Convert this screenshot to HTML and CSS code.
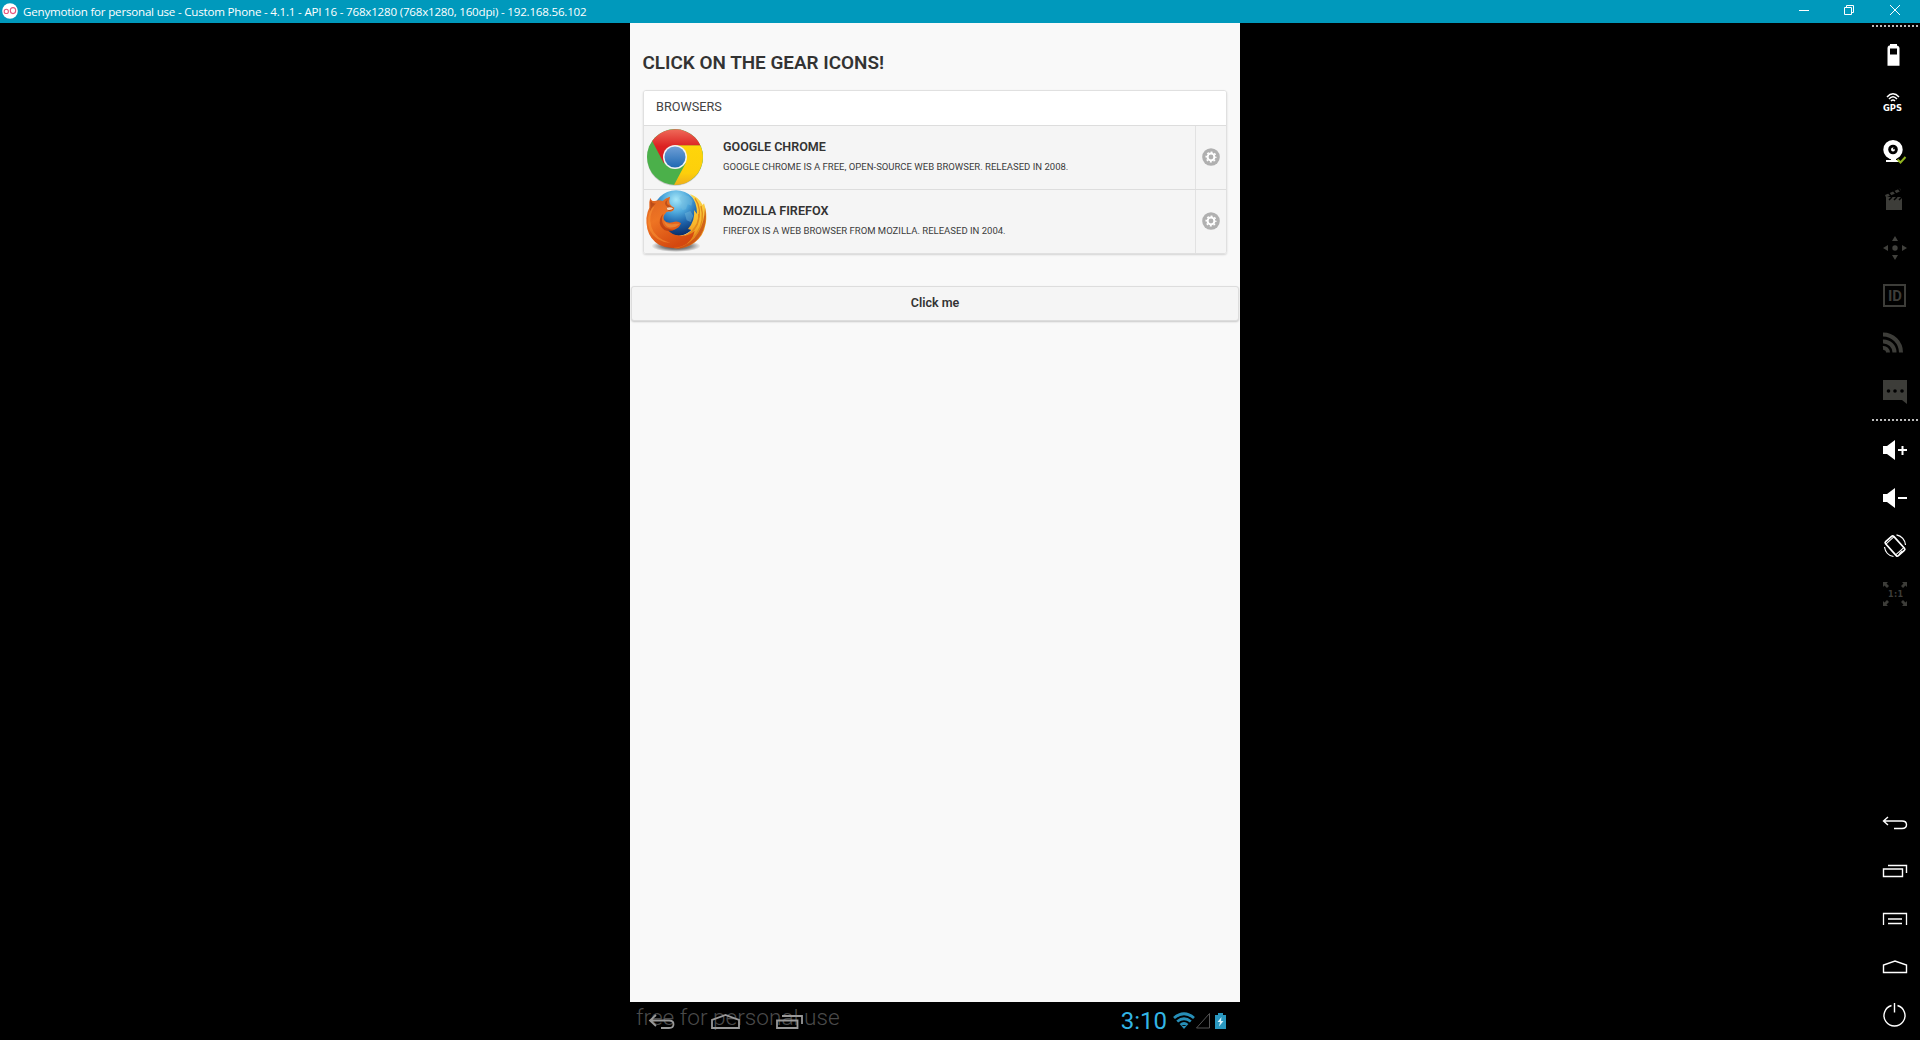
FILE: index.html
```html
<!DOCTYPE html>
<html lang="en">
<head>
<meta charset="utf-8">
<title>Genymotion</title>
<link rel="stylesheet" href="styles.css">
</head>
<body>
<header class="titlebar">
  <svg class="logo" width="16" height="16" viewBox="0 0 16 16"><circle cx="8" cy="8" r="7.8" fill="#fff"/><g fill="none" stroke="#e5587f" stroke-width="1.1"><circle cx="4.3" cy="8.4" r="2.1"/><ellipse cx="11" cy="7.6" rx="2.7" ry="3"/></g></svg>
  <span class="window-title">Genymotion for personal use - Custom Phone - 4.1.1 - API 16 - 768x1280 (768x1280, 160dpi) - 192.168.56.102</span>
  <svg class="window-buttons" width="122" height="23" viewBox="0 0 122 23" fill="none" stroke="#fff"><path d="M1 10.5H11M46.500 7.500H53.500V14.500H46.500ZM48.500 7V5.500H55.500V12.500H54M92 5L102 15M102 5L92 15"/></svg>
</header>
<div class="workspace">
  <main class="phone">
    <section class="screen">
      <h1>CLICK ON THE GEAR ICONS!</h1>
      <ul class="list">
        <li class="divider">BROWSERS</li>
        <li class="row">
          <svg class="thumb" width="64" height="63" viewBox="0 0 64 63">
            <defs>
              <linearGradient id="red" x2="0" y2="1"><stop stop-color="#ef6a59"/><stop offset=".5" stop-color="#dc2222"/><stop offset="1" stop-color="#d9141c"/></linearGradient>
              <linearGradient id="blue" x2="0" y2="1"><stop stop-color="#6f9fd6"/><stop offset="1" stop-color="#1f69b3"/></linearGradient>
              <linearGradient id="yellow" x2="0" y2="1"><stop stop-color="#ffd50a"/><stop offset=".7" stop-color="#fdcf0b"/><stop offset="1" stop-color="#efae1c"/></linearGradient>
            </defs>
            <ellipse cx="31" cy="32" rx="28" ry="27.800" fill="#000" opacity=".18"/>
            <circle cx="31" cy="31" r="28" fill="#4bb04a"/>
            <path d="M31 19.200H56.300A28 28 0 0 1 30 59L41.500 37.500Z" fill="url(#yellow)"/>
            <path d="M8.200 15A28 28 0 0 1 56.300 19.200H31L20 37.500Z" fill="url(#red)"/>
            <circle cx="31" cy="31" r="12" fill="#f3f3f3"/><circle cx="31" cy="31" r="10.500" fill="url(#blue)"/>
          </svg>
          <div class="copy"><h2>GOOGLE CHROME</h2><p>GOOGLE CHROME IS A FREE, OPEN-SOURCE WEB BROWSER. RELEASED IN 2008.</p></div>
          <div class="gear"><svg width="18" height="18" viewBox="0 0 18 18"><circle cx="9" cy="9" r="8.800" fill="#b0b0b0"/><circle cx="9" cy="9" r="3.400" fill="none" stroke="#fff" stroke-width="2"/><circle cx="9" cy="9" r="4.800" fill="none" stroke="#fff" stroke-width="1.500" stroke-dasharray="1.900 1.870" stroke-dashoffset=".95"/></svg></div>
        </li>
        <li class="row">
          <svg class="thumb" width="64" height="63" viewBox="12 12 192 189">
            <defs>
              <radialGradient id="globe" cx=".5" cy=".2" r=".8"><stop stop-color="#a5e6f8"/><stop offset=".35" stop-color="#4fa9dc"/><stop offset=".65" stop-color="#1d63ab"/><stop offset="1" stop-color="#0a2a63"/></radialGradient>
              <linearGradient id="fox" x2=".5" y2="1"><stop stop-color="#dd6321"/><stop offset=".45" stop-color="#ee7423"/><stop offset="1" stop-color="#d4480f"/></linearGradient>
              <linearGradient id="tail" x2="0" y2="1"><stop stop-color="#fbd94c"/><stop offset=".55" stop-color="#f8b62c"/><stop offset="1" stop-color="#e36b17"/></linearGradient>
              <radialGradient id="ground"><stop stop-opacity=".8"/><stop offset=".6" stop-opacity=".45"/><stop offset="1" stop-opacity="0"/></radialGradient>
            </defs>
            <ellipse cx="108" cy="180" rx="74" ry="18" fill="url(#ground)"/>
            <circle cx="108" cy="82" r="69" fill="url(#globe)"/>
            <path d="M118 36L130 26L146 31L158 44L154 59L143 55L138 70L128 72L120 61L126 52ZM134 82L151 75L160 89L152 108L140 103Z" fill="#75bddd" opacity=".45"/>
            <path d="M150 24Q178 34 188 57L192 52Q203 84 197 114Q191 151 163 170Q137 190 101 187L105 148Q137 153 154 132L144 129Q166 104 162 72L171 84Q171 47 150 24Z" fill="url(#tail)"/>
            <path d="M165 37Q188 70 172 112Q160 139 130 158M183 60Q196 105 170 142Q151 168 116 177M176 84Q180 119 149 143" fill="none" stroke="#e18a1b" stroke-width="4"/>
            <path d="M195 65Q205 111 181 149Q156 185 108 188Q155 175 174 141Q194 107 195 65Z" fill="#c44a14" opacity=".75"/>
            <path d="M31 35Q34 47 45 45Q56 41 68 45Q76 36 90 32Q86 46 89 53Q93 60 103 65Q102 75 91 77Q79 75 75 84Q68 91 72 102Q80 114 98 109Q113 103 123 112Q119 126 103 131Q91 135 82 130Q97 151 126 149Q149 149 164 134Q158 167 126 181Q91 193 57 176Q30 160 22 129Q14 92 28 65Q26 48 31 35Z" fill="url(#fox)"/>
            <path d="M32 41Q37 55 48 52Q36 61 30 77Q32 60 31 50ZM87 37Q78 46 82 55L101 66Q99 74 87 75Q76 69 82 62Q73 56 76 47Z" fill="#ad4216" opacity=".7"/>
            <path d="M44 61Q24 91 34 122Q44 156 91 171Q47 168 29 133Q16 95 35 67Z" fill="#f99436" opacity=".55"/>
            <path d="M70 83Q61 104 72 119Q81 130 104 131Q77 144 62 120Q53 98 70 83Z" fill="#b53b10" opacity=".75"/>
            <path d="M72 104Q84 119 105 113L120 113Q105 127 86 124Q75 120 72 104Z" fill="#e98335"/>
            <path d="M80 65Q92 62 100 67Q93 74 82 71Z" fill="#f4d8bd"/>
          </svg>
          <div class="copy"><h2 class="firefox-name">MOZILLA FIREFOX</h2><p>FIREFOX IS A WEB BROWSER FROM MOZILLA. RELEASED IN 2004.</p></div>
          <div class="gear"><svg width="18" height="18" viewBox="0 0 18 18"><circle cx="9" cy="9" r="8.800" fill="#b0b0b0"/><circle cx="9" cy="9" r="3.400" fill="none" stroke="#fff" stroke-width="2"/><circle cx="9" cy="9" r="4.800" fill="none" stroke="#fff" stroke-width="1.500" stroke-dasharray="1.900 1.870" stroke-dashoffset=".95"/></svg></div>
        </li>
      </ul>
      <button class="click" type="button">Click me</button>
    </section>
    <footer class="navbar">
      <span class="watermark">free for personal use</span>
      <svg class="nav-icons" width="200" height="38" viewBox="0 0 200 38" fill="none" stroke="#999" stroke-width="1.800"><path d="M26 13L20 18.500L26 24M20 18.500H39C45 18.500 45 26 39 26H31M82 26V18L95.500 13L109 18V26ZM147 18.500H167.500V26H147ZM152 14H172V22"/></svg>
      <span class="clock">3:10</span>
      <svg class="status" width="54" height="18" viewBox="0 0 54 18"><g fill="none" stroke="#278fb8" stroke-width="2.800"><path d="M1 6Q11 -2.500 21 6M4.200 9.500Q11 4 17.800 9.500M7.500 13Q11 10 14.500 13"/></g><path d="M8.500 14L11 17L13.500 14Z" fill="#278fb8"/><path d="M23.500 16H36.500V1.500Z" fill="none" stroke="#555"/><path d="M42 3H45V1H50V3H53V17H42Z" fill="#2997bf"/><path d="M48.500 5L44.500 10H47L46 14.500L50.500 9H48Z" fill="#d8f3fc"/></svg>
    </footer>
  </main>
  <aside class="tools">
    <div class="dots"></div>
    <div class="group group-top">
      <svg viewBox="0 0 48 48"><path d="M18 14.500Q16.500 15 16.500 17V34.700H28.500V17Q28.500 15 26 14.500V13H19V14.500ZM19 17.500H26V23.500H19Z" fill="#fff" fill-rule="evenodd"/></svg>
      <svg viewBox="0 0 48 48"><g fill="none" stroke="#fff" stroke-width="1.500"><path d="M16 18Q22 11.500 28 18M18 20Q22 15.500 26 20M20 22Q22 20 24 22"/></g><text class="gps" x="12" y="32" textLength="19" lengthAdjust="spacingAndGlyphs">GPS</text></svg>
      <svg viewBox="0 0 48 48"><path d="M22 13a9.700 9.700 0 1 1 0 19.400a9.700 9.700 0 1 1 0-19.400" fill="#fff"/><path d="M20 31H25V33H28V35H15V33H20Z" fill="#fff"/><circle cx="22" cy="22.500" r="4.800"/><circle cx="22" cy="22.500" r="2" fill="#fff"/><circle cx="23" cy="21.500" r="1"/><path d="M26.500 32.500L29.500 35.500L34.500 30" fill="none" stroke="#91b51f" stroke-width="2"/></svg>
      <svg viewBox="0 0 48 48" fill="#3d3d39"><path d="M15 24H31V35H15ZM14 20L29 13.500L30 16L15 22.500Z"/><path d="M15 22H31V24H15Z"/><path d="M17 17L20 21M22 15L25 19M27 13L30 17M18 25L21 22M23 25L26 22M28 25L31 22" stroke="#000" stroke-width="1.500"/></svg>
      <svg viewBox="0 0 48 48" fill="#41413d"><circle cx="24" cy="25" r="2.700"/><path d="M24 13L27 18H21ZM24 37L21 32H27ZM12 25L17 22V28ZM36 25L31 22V28Z"/></svg>
      <svg viewBox="0 0 48 48"><path d="M13 14H34V35H13Z" fill="none" stroke="#3d3d39" stroke-width="2"/><text class="device-id" x="17" y="30" textLength="14" lengthAdjust="spacingAndGlyphs">ID</text></svg>
      <svg viewBox="0 0 48 48"><path d="M12 29A4.500 4.500 0 0 1 17 33.500M12 22.500A11 11 0 0 1 23.500 33.500M12 15.500A18 18 0 0 1 30 33.500" fill="none" stroke="#3d3d39" stroke-width="4"/></svg>
      <svg viewBox="0 0 48 48"><path d="M12 13H36V37L31 33H12Z" fill="#3d3d39"/><g fill="#000"><circle cx="17.500" cy="24" r="1.800"/><circle cx="24" cy="24" r="1.800"/><circle cx="31" cy="24" r="1.800"/></g></svg>
    </div>
    <div class="dots dots-lower"></div>
    <div class="group">
      <svg viewBox="0 0 48 48" fill="#fff"><path d="M12 20H16L24 14V34L16 28H12ZM27 23H30.500V20H32.500V23H36V25H32.500V29H30.500V25H27Z"/></svg>
      <svg viewBox="0 0 48 48" fill="#fff"><path d="M12 20H16L24 14V34L16 28H12ZM27 23H36V25H27Z"/></svg>
      <svg viewBox="0 0 48 48" fill="none" stroke="#fff"><g transform="rotate(-42 24 24)"><rect x="18.500" y="14.500" width="11" height="19" rx="1.500" stroke-width="1.700"/><path d="M18.500 31H29.500M22 32.500H26M18.500 16.500H29.500"/></g><path d="M25.500 12.800A11 11 0 0 1 34.500 23M13.500 25A11 11 0 0 0 22.500 34.500" stroke-width="1.200"/></svg>
      <svg viewBox="0 0 48 48" fill="#3d3d39"><path d="M12 12H17L15.500 13.500L18 16L16 18L13.500 15.500L12 17ZM36 12H31L32.500 13.500L30 16L32 18L34.500 15.500L36 17ZM12 36H17L15.500 34.500L18 32L16 30L13.500 32.500L12 31ZM36 36H31L32.500 34.500L30 32L32 30L34.500 32.500L36 31Z"/><text class="scale" x="17" y="27" textLength="15">1:1</text></svg>
    </div>
    <div class="group group-bottom">
      <svg viewBox="0 0 48 48" fill="none" stroke="#fff" stroke-width="1.400"><path d="M17 18L12.500 22L17 26M12.500 22H31C37 22 37 29.500 31 29.500H23"/></svg>
      <svg viewBox="0 0 48 48" fill="none" stroke="#fff" stroke-width="1.400"><path d="M12.500 22H31.500V29.500H12.500ZM17 18.500H35.500V26"/></svg>
      <svg viewBox="0 0 48 48" fill="none" stroke="#fff" stroke-width="1.300"><path d="M12.500 30V18.500H35.500V30M17 24H31M17 28.500H31"/></svg>
      <svg viewBox="0 0 48 48" fill="none" stroke="#fff" stroke-width="1.400"><path d="M12.500 29.500V22L24 18L35.500 22V29.500Z"/></svg>
      <svg viewBox="0 0 48 48" fill="none" stroke="#fff" stroke-width="1.400"><path d="M20.500 14.500A10.500 10.500 0 1 0 26.500 14.500M23.500 12V21.500"/></svg>
    </div>
  </aside>
</div>
</body>
</html>
```

FILE: styles.css
```css
* { box-sizing: border-box; }
body { margin: 0; height: 1041px; overflow: hidden; background: #000; font-family: Roboto, sans-serif; }
.titlebar { height: 23px; background: #0099bc; color: #fff; display: flex; align-items: center; padding: 0 0 0 2px; }
.logo { margin-top: -2px; }
.window-title { font: 11.6px/20px "Open Sans", sans-serif; letter-spacing: -.21px; margin-left: 5px; white-space: nowrap; }
.window-buttons { margin-left: auto; }
.workspace { height: 1018px; display: flex; justify-content: space-between; padding-left: 630px; border-bottom: 1px solid #fff; }
.phone { width: 610px; display: flex; flex-direction: column; }
.screen { height: 979px; background: #f9f9f9; color: #333; padding-top: 28px; }
h1 { margin: 0 0 0 12.5px; font-size: 18.9px; line-height: 24px; font-weight: 600; white-space: nowrap; }
.list { list-style: none; margin: 15px 13px 0; padding: 0; border: 1px solid #e0e0e0; border-radius: 3px; box-shadow: 0 1px 2px rgba(0,0,0,.15); overflow: hidden; }
.divider { height: 34px; background: #fff; font-size: 12.7px; line-height: 32px; padding-left: 12px; color: #444; }
.row { display: flex; height: 64px; background: #f5f5f5; border-top: 1px solid #ddd; }
.copy { flex: 1; padding: 12px 0 0 15px; white-space: nowrap; }
h2 { font-size: 12.5px; line-height: 18px; font-weight: 600; margin: 0; }
.firefox-name { font-size: 12.65px; }
p { font-size: 9.53px; line-height: 14px; margin: 4px 0 0; color: #3c3c3c; }
.gear { width: 31px; border-left: 1px solid #e2e2e2; display: flex; align-items: center; padding: 0 0 1px 6px; }
.click { display: block; width: 608px; height: 35px; margin: 32px 0 0 1px; border: 1px solid #ddd; border-radius: 3px; background: #f5f5f5; box-shadow: 0 1px 2px rgba(0,0,0,.2); font: 600 12.5px Roboto, sans-serif; color: #333; padding: 0 0 2px; }
.navbar { height: 38px; position: relative; display: flex; align-items: center; padding-right: 13px; justify-content: flex-end; }
.watermark { position: absolute; left: 6px; top: 1px; font-size: 22.6px; line-height: 30px; font-weight: 300; color: #4a4a4a; white-space: nowrap; }
.nav-icons { position: absolute; left: 0; top: 0; }
.clock { color: #33b5e5; font-size: 24px; line-height: 38px; margin-right: 6px; }
.tools { width: 49px; display: flex; flex-direction: column; padding-top: 2px; }
.dots { height: 2px; margin-left: 1px; width: 47px; background: repeating-linear-gradient(90deg, #bbb 0 2px, transparent 2px 4px); }
.dots-lower { margin-top: 4px; }
.group { display: flex; flex-direction: column; margin-top: 5px; }
.group-top { margin-top: 4px; }
.group-bottom { margin-top: auto; margin-bottom: 1px; }
.group svg { width: 48px; height: 48px; display: block; }
.gps { font: 700 9px "DejaVu Sans", sans-serif; fill: #fff; }
.device-id { font: 700 14px Roboto, sans-serif; fill: #3d3d39; }
.scale { font: 700 8px "DejaVu Sans", sans-serif; fill: #3d3d39; }
```
